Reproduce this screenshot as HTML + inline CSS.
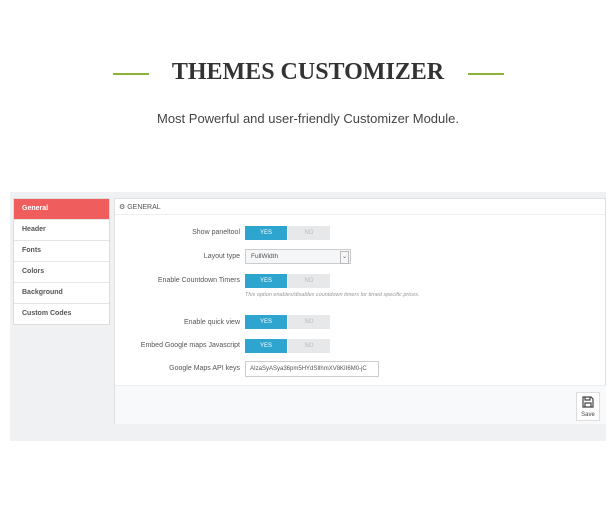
<!DOCTYPE html>
<html><head><style>
body{margin:0;width:616px;height:508px;background:#fff;position:relative;font-family:"Liberation Sans",sans-serif;overflow:hidden}
.a{position:absolute}
.t{font-family:"Liberation Serif",serif;font-weight:bold;font-size:24px;color:#333;left:0;width:616px;text-align:center;top:59px;letter-spacing:0}
.ln{height:2px;background:#8cb23a;width:36px;top:73px}
.sub{top:111px;left:0;width:616px;text-align:center;font-size:13px;color:#444}
.gray{left:10px;top:192px;width:596px;height:249px;background:#eff1f2}
.side{left:13px;top:198px;width:95px;background:#fff;border:1px solid #ddd}
.side div{height:20px;line-height:20px;font-size:7px;font-weight:bold;color:#555;padding-left:8px;border-bottom:1px solid #e5e5e5}
.side div.on{background:#ef5d5d;color:#fff}
.panel{left:114px;top:198px;width:492px;height:226px;background:#fff;border:1px solid #e0e0e0;box-sizing:border-box}
.hd{left:119px;top:203px;font-size:7px;color:#555}
.lbl{font-size:7px;color:#555;text-align:right;width:240px;left:0}
.yes{width:42px;height:14px;background:#2ea5cf;color:#fff;font-size:6px;text-align:center;line-height:14px;left:245px}
.no{width:42px;height:14px;background:#e7e8e9;color:#bbb;font-size:6px;text-align:center;line-height:14px;left:288px}
.foot{left:115px;top:385px;width:491px;height:38px;background:#f8f9fa;border-top:1px solid #eee}
</style></head><body>
<div class="a ln" style="left:113px"></div>
<div class="a ln" style="left:468px"></div>
<div class="a t">THEMES CUSTOMIZER</div>
<div class="a sub">Most Powerful and user-friendly Customizer Module.</div>
<div class="a gray"></div>
<div class="a side"><div class="on">General</div><div>Header</div><div>Fonts</div><div>Colors</div><div>Background</div><div style="border:0">Custom Codes</div></div>
<div class="a panel"></div>
<div class="a" style="left:115px;top:214px;width:490px;height:1px;background:#eee"></div>
<div class="a hd">⚙ GENERAL</div>
<div class="a lbl" style="top:229px">Show paneltool</div>
<div class="a yes" style="top:226px">YES</div><div class="a no" style="top:226px">NO</div>
<div class="a lbl" style="top:253px">Layout type</div>
<div class="a" style="left:245px;top:249px;width:106px;height:15px;border:1px solid #ccc;box-sizing:border-box;background:#f5f6f7;font-size:6.5px;color:#555;line-height:13px;padding-left:5px">FullWidth<span style="position:absolute;right:1px;top:1px;width:7px;height:11px;border:1px solid #bbb;font-size:6px;line-height:10px;text-align:center">⌄</span></div>
<div class="a lbl" style="top:277px">Enable Countdown Timers</div>
<div class="a yes" style="top:274px">YES</div><div class="a no" style="top:274px">NO</div>
<div class="a" style="left:245px;top:292px;font-size:5.5px;font-style:italic;color:#999">This option enables/disables countdown timers for timed specific prices.</div>
<div class="a lbl" style="top:319px">Enable quick view</div>
<div class="a yes" style="top:315px">YES</div><div class="a no" style="top:315px">NO</div>
<div class="a lbl" style="top:342px">Embed Google maps Javascript</div>
<div class="a yes" style="top:339px">YES</div><div class="a no" style="top:339px">NO</div>
<div class="a lbl" style="top:365px">Google Maps API keys</div>
<div class="a" style="left:245px;top:361px;width:134px;height:16px;border:1px solid #ccc;box-sizing:border-box;font-size:6px;color:#555;line-height:14px;padding-left:4px;overflow:hidden;white-space:nowrap">AIzaSyASya36pm5HYdSIlhmXV8KII6M0-jC</div>
<div class="a foot"></div>
<div class="a" style="left:576px;top:392px;width:24px;height:29px;border:1px solid #ddd;background:#fff;box-sizing:border-box;text-align:center">
<svg width="12" height="12" viewBox="0 0 12 12" style="margin-top:3px"><path d="M1 1h8l2 2v8H1z M3 1v3h5V1 M3 11V7h6v4" fill="none" stroke="#444" stroke-width="1.2"/></svg>
<div style="font-size:6px;color:#444;margin-top:-1px">Save</div></div>
</body></html>
